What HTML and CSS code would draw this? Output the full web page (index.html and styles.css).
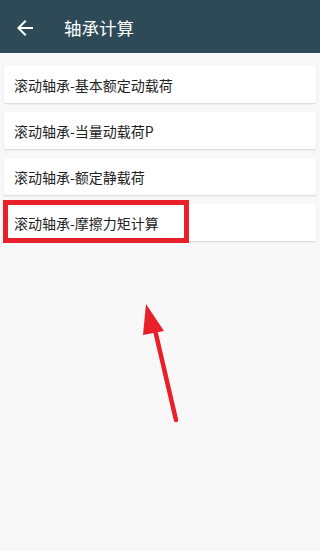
FILE: index.html
```html
<!DOCTYPE html>
<html lang="zh-CN">
<head>
    <meta charset="UTF-8">
    <meta name="viewport" content="width=device-width, initial-scale=1.0">
    <title>轴承计算</title>
    <link rel="stylesheet" href="styles.css">
</head>
<body>
    <div class="app">
        <header class="toolbar">
            <span class="back-btn">
                <svg width="24" height="24" viewBox="0 0 24 24">
                    <path d="M20 11H7.83l5.59-5.59L12 4l-8 8 8 8 1.41-1.41L7.83 13H20v-2z" fill="#fff"/>
                </svg>
            </span>
            <h1 class="title">轴承计算</h1>
        </header>

        <ul class="menu-list">
            <li class="menu-item">滚动轴承-基本额定动载荷</li>
            <li class="menu-item">滚动轴承-当量动载荷P</li>
            <li class="menu-item">滚动轴承-额定静载荷</li>
            <li class="menu-item">滚动轴承-摩擦力矩计算</li>
        </ul>

        <!-- annotation overlay -->
        <div class="mark-box"></div>
        <svg class="mark-arrow" width="320" height="551" viewBox="0 0 320 551">
            <line x1="155" y1="330" x2="176" y2="420" stroke="#e8202a" stroke-width="4.5" stroke-linecap="round"/>
            <polygon points="146,304 143,335 164,331" fill="#e8202a"/>
        </svg>
    </div>
</body>
</html>
```

FILE: styles.css
```css
body {
    margin: 0;
    font-family: "Noto Sans CJK SC", "Noto Sans", sans-serif;
    background-color: #f8f8f8;
}

.app {
    position: relative;
    width: 320px;
    height: 551px;
    overflow: hidden;
    background-color: #f8f8f8;
}

.toolbar {
    height: 53px;
    display: flex;
    align-items: center;
    background-color: #2d4a56;
    color: #fff;
}

.back-btn {
    display: flex;
    width: 24px;
    height: 24px;
    margin-left: 13px;
    margin-top: 2px;
}

.title {
    margin: 0 0 0 27px;
    font-size: 17.5px;
    font-weight: normal;
    line-height: 1;
    padding-top: 2px;
}

.menu-list {
    list-style: none;
    margin: 0;
    padding: 13px 4px 0 4px;
}

.menu-item {
    height: 37px;
    margin-bottom: 9px;
    padding-left: 10px;
    display: flex;
    align-items: center;
    font-size: 14px;
    color: #222;
    background-color: #fff;
    border-radius: 2px;
    box-shadow: 0 1px 2px rgba(0, 0, 0, 0.14);
}

.mark-box {
    position: absolute;
    left: 3px;
    top: 200px;
    width: 176px;
    height: 33px;
    border: 5px solid #e8202a;
}

.mark-arrow {
    position: absolute;
    left: 0;
    top: 0;
}
```
